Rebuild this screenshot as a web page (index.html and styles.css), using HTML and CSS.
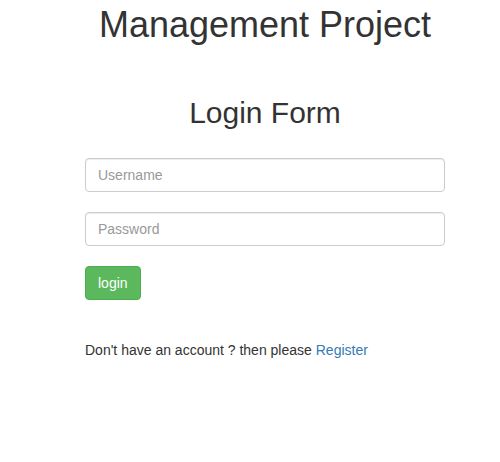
FILE: index.html
```html
<!DOCTYPE html>
<html>
<head>
<meta charset="utf-8">
<link rel="stylesheet" href="styles.css">
</head>
<body>
<div class="container">
  <h1 class="title">Management Project</h1>
  <h2 class="subtitle">Login Form</h2>
  <form class="form">
    <input class="field" type="text" placeholder="Username">
    <input class="field" type="password" placeholder="Password">
    <button class="btn" type="button">login</button>
  </form>
  <p class="note">Don't have an account ? then please <a class="link" href="#">Register</a></p>
</div>
</body>
</html>
```
FILE: styles.css
```css
html, body {
  margin: 0;
  padding: 0;
  background: #fff;
}
body {
  font-family: "Liberation Sans", Arial, sans-serif;
  font-size: 14px;
  line-height: 1.42857;
  color: #333;
}
.container {
  width: 360px;
  margin-left: 85px;
  display: flex;
  flex-direction: column;
}
.title {
  font-size: 36px;
  font-weight: 400;
  line-height: 1.1;
  margin: 5px 0 0;
  text-align: center;
}
.subtitle {
  font-size: 30px;
  font-weight: 400;
  line-height: 1.1;
  margin: 51px 0 0;
  text-align: center;
}
.form {
  display: flex;
  flex-direction: column;
  align-items: flex-start;
  gap: 20px;
  margin-top: 29px;
}
.field {
  box-sizing: border-box;
  width: 360px;
  height: 34px;
  padding: 6px 12px;
  font-family: inherit;
  font-size: 14px;
  color: #555;
  border: 1px solid #ccc;
  border-radius: 4px;
  box-shadow: inset 0 1px 1px rgba(0,0,0,.075);
  outline: none;
}
.field::placeholder {
  color: #999;
}
.btn {
  box-sizing: border-box;
  height: 34px;
  padding: 6px 12px;
  font-family: inherit;
  font-size: 14px;
  color: #fff;
  background: #5cb85c;
  border: 1px solid #4cae4c;
  border-radius: 4px;
  cursor: pointer;
}
.note {
  margin: 41px 0 0;
}
.link {
  color: #337ab7;
  text-decoration: none;
}
```
